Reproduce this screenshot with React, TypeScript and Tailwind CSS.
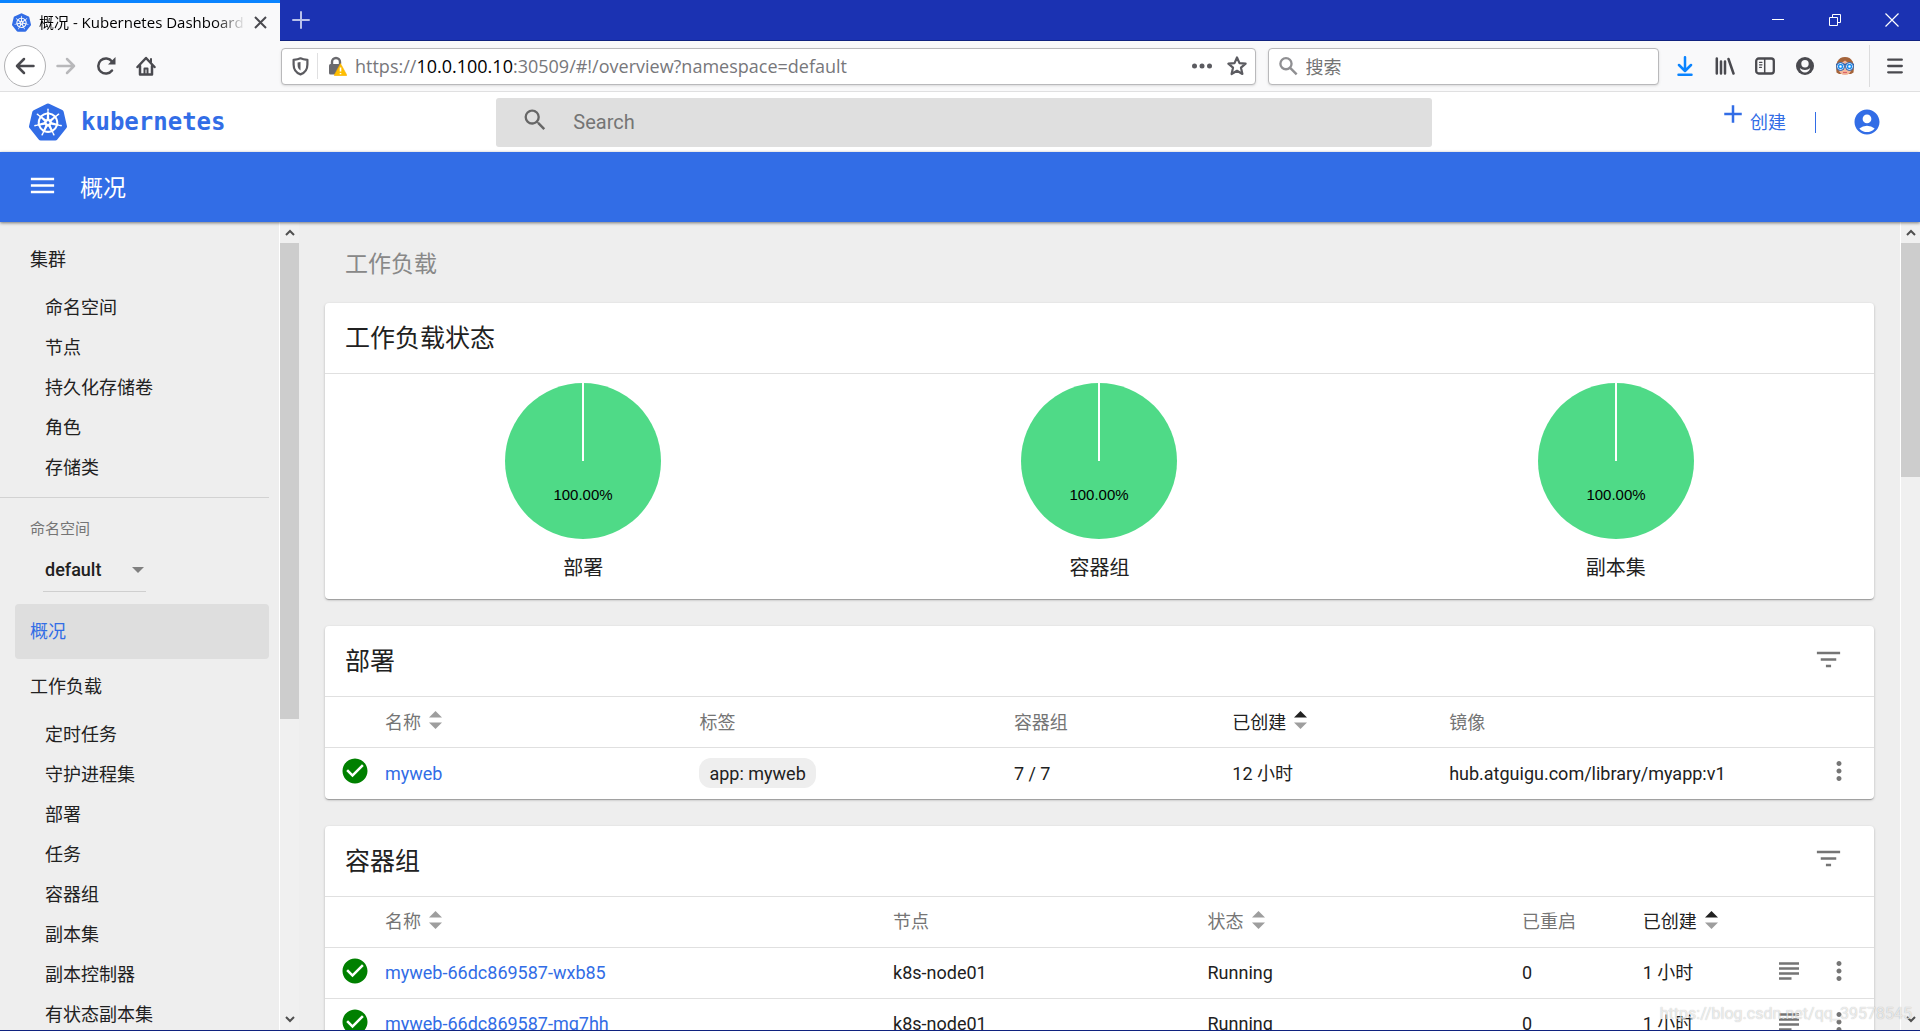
import React from "react";
import {
  MdAccountCircle,
  MdAdd,
  MdCheckCircle,
  MdFilterList,
  MdMenu,
  MdMoreVert,
  MdSearch,
  MdSubject,
} from "react-icons/md";
import { SiKubernetes } from "react-icons/si";

interface Column {
  label: string;
  width: string;
  sort?: "none" | "asc";
}

interface Pod {
  name: string;
  node: string;
  status: string;
  restarts: number;
  age: string;
}

const clusterItems = ["命名空间", "节点", "持久化存储卷", "角色", "存储类"];

const workloadItems = [
  "定时任务",
  "守护进程集",
  "部署",
  "任务",
  "容器组",
  "副本集",
  "副本控制器",
  "有状态副本集",
];

const charts = ["部署", "容器组", "副本集"];

const deploymentColumns: Column[] = [
  { label: "名称", width: "w-[20.3%]", sort: "none" },
  { label: "标签", width: "w-[20.3%]" },
  { label: "容器组", width: "w-[14.1%]" },
  { label: "已创建", width: "w-[14%]", sort: "asc" },
  { label: "镜像", width: "" },
];

const podColumns: Column[] = [
  { label: "名称", width: "w-[32.8%]", sort: "none" },
  { label: "节点", width: "w-[20.3%]" },
  { label: "状态", width: "w-[20.3%]", sort: "none" },
  { label: "已重启", width: "w-[7.8%]" },
  { label: "已创建", width: "", sort: "asc" },
];

const pods: Pod[] = [
  { name: "myweb-66dc869587-wxb85", node: "k8s-node01", status: "Running", restarts: 0, age: "1 小时" },
  { name: "myweb-66dc869587-mg7hh", node: "k8s-node01", status: "Running", restarts: 0, age: "1 小时" },
];

const TitleBar: React.FC = () => (
  <div className="flex h-[41px] shrink-0 border-b border-[#10227f] bg-[#1b32b2]">
    <div className="flex h-[41px] w-[280px] items-center border-t-[3px] border-[#0a84ff] bg-[#f9f9fa] pl-3 pr-[10px]">
      <SiKubernetes size={19} className="shrink-0 text-[#326de6]" />
      <span className="ml-2 flex-1 overflow-hidden whitespace-nowrap bg-gradient-to-r from-black from-85% to-transparent bg-clip-text font-['Open_Sans','Noto_Sans_CJK_SC',sans-serif] text-[15px] text-transparent">
        概况 - Kubernetes Dashboard
      </span>
      <button aria-label="关闭标签页" className="ml-1 flex h-5 w-5 items-center justify-center">
        <svg width="13" height="13" viewBox="0 0 13 13" stroke="#4a4a4f" strokeWidth="2">
          <path d="M1 1l11 11M12 1L1 12" />
        </svg>
      </button>
    </div>
    <button aria-label="新标签页" className="flex w-[42px] items-center justify-center">
      <svg width="18" height="18" viewBox="0 0 18 18" stroke="#b9c1ea" strokeWidth="2" strokeLinecap="round">
        <path d="M9 1v16M1 9h16" />
      </svg>
    </button>
    <div className="ml-auto flex pb-px">
      <button aria-label="最小化" className="flex w-14 items-center justify-center">
        <svg width="12" height="12" stroke="#fff">
          <path d="M0 5.5h12" />
        </svg>
      </button>
      <button aria-label="还原" className="flex w-[57px] items-center justify-center">
        <svg width="12" height="12" stroke="#fff" fill="none">
          <path d="M0.5 3.5h8v8h-8zM3.5 3.5v-3h8v8h-3" />
        </svg>
      </button>
      <button aria-label="关闭" className="flex w-[57px] items-center justify-center">
        <svg width="14" height="14" stroke="#fff" strokeWidth="1.2">
          <path d="M0.5 0.5l13 13M13.5 0.5l-13 13" />
        </svg>
      </button>
    </div>
  </div>
);

const FaceIcon: React.FC = () => (
  <svg width="20" height="20" viewBox="0 0 20 20">
    <path d="M1.5 16.500C0 7 3 1 10 1s10 6 8.500 15.500L16 18H4z" fill="#a5643a" />
    <path d="M3.500 8c2-1 5-2 6.500-3.500C11.500 6 14.500 7 16.500 8v5c-1 4-3 6-6.500 6s-5.500-2-6.500-6z" fill="#f3b79b" />
    <path d="M1 8.500h18" stroke="#1d57a8" strokeWidth="1.500" />
    <circle cx="5.500" cy="10.500" r="4" fill="#e8f4ff" stroke="#1d57a8" />
    <circle cx="14.500" cy="10.500" r="4" fill="#e8f4ff" stroke="#1d57a8" />
    <circle cx="5.500" cy="10.500" r="2" fill="#fff" stroke="#1b8ef2" strokeWidth="1.500" />
    <circle cx="14.500" cy="10.500" r="2" fill="#fff" stroke="#1b8ef2" strokeWidth="1.500" />
    <path d="M8 16.500h4" stroke="#d9626b" strokeWidth="1.200" />
  </svg>
);

const Toolbar: React.FC = () => (
  <div className="flex h-[51px] shrink-0 items-center border-b border-[#e0e0e1] bg-[#f9f9fa] pl-1 pr-1 text-[#4a4a4f]">
    <div className="flex w-[277px] shrink-0 items-center">
      <button aria-label="后退" className="flex h-[42px] w-[42px] items-center justify-center rounded-full border border-[#b1b1b3] bg-white">
        <svg width="20" height="18" viewBox="0 0 20 18" fill="none" stroke="currentColor" strokeWidth="2.5" strokeLinecap="round" strokeLinejoin="round">
          <path d="M18.500 9H2M9 2L2 9l7 7" />
        </svg>
      </button>
      <button aria-label="前进" className="flex w-10 items-center justify-center text-[#b8b8ba]">
        <svg width="20" height="18" viewBox="0 0 20 18" fill="none" stroke="currentColor" strokeWidth="2.5" strokeLinecap="round" strokeLinejoin="round">
          <path d="M1.500 9H18M11 2l7 7-7 7" />
        </svg>
      </button>
      <button aria-label="刷新" className="flex w-10 items-center justify-center">
        <svg width="20" height="20" viewBox="0 0 20 20" fill="none" stroke="currentColor" strokeWidth="2.500" strokeLinecap="round">
          <path d="M16 14.500A7.600 7.600 0 1 1 16 5.500" />
          <path d="M19.500 1v7.500H12z" fill="currentColor" stroke="none" />
        </svg>
      </button>
      <button aria-label="主页" className="flex w-10 items-center justify-center">
        <svg width="20" height="20" viewBox="0 0 20 20" fill="none" stroke="currentColor" strokeWidth="2.500" strokeLinecap="round" strokeLinejoin="round">
          <path d="M1.500 11L10 2l8.500 9" />
          <path d="M4 10v8.500h12V10" />
          <path d="M8.500 18v-5.500h3V18M15 3v3" strokeWidth="2" />
        </svg>
      </button>
    </div>
    <div className="flex h-[37px] flex-1 items-center rounded-sm border border-[#b9b9bb] bg-white pl-2.5 pr-2 shadow-sm">
      <svg width="17" height="19" viewBox="0 0 17 19" fill="none" stroke="#5b5b60" strokeWidth="2.200" strokeLinejoin="round">
        <path d="M8.500 1.300c2.300 1.200 4.700 1.400 6.900 1.500v4.700c0 5-2.600 8.400-6.900 9.900-4.300-1.500-6.900-4.900-6.900-9.900V2.800c2.200-.1 4.600-.3 6.900-1.500z" />
        <path d="M8.500 5v8.500c-1.600-1-2.900-2.700-2.900-5.500V5.500z" fill="#5b5b60" stroke="none" />
      </svg>
      <span className="ml-2 h-[26px] w-px bg-[#e0e0e1]" />
      <svg className="ml-2.5 shrink-0" width="19" height="20" viewBox="0 0 19 20">
        <path d="M4 9V6a4 4 0 0 1 8 0v2" fill="none" stroke="#6a6a6e" strokeWidth="2.400" />
        <rect x="1" y="8" width="12" height="10.500" rx="1.500" fill="#6a6a6e" />
        <path d="M12.500 7.500l6 11a.9.900 0 0 1-.8 1.300H7.300a.9.900 0 0 1-.8-1.300z" fill="#ffbf00" stroke="#f5a800" strokeWidth="0.500" />
        <path d="M12.500 11.500v4M12.500 17v1.300" stroke="#fff" strokeWidth="1.600" />
      </svg>
      <span className="ml-2 flex-1 font-['Open_Sans','Noto_Sans_CJK_SC',sans-serif] text-[18px] text-[#77777b]">
        https://<span className="text-black">10.0.100.10</span>:30509/#!/overview?namespace=default
      </span>
      <button aria-label="页面操作" className="mr-[15px]">
        <svg width="20" height="6" fill="#5b5b60">
          <circle cx="2.500" cy="3" r="2.500" />
          <circle cx="10" cy="3" r="2.500" />
          <circle cx="17.500" cy="3" r="2.500" />
        </svg>
      </button>
      <button aria-label="收藏">
        <svg width="20" height="20" viewBox="0 0 20 20" fill="none" stroke="#5b5b60" strokeWidth="2.200" strokeLinejoin="round">
          <path d="M10 1.500l2.500 5.600 6.100.6-4.600 4 1.400 6.300L10 14.800 4.600 18 6 11.700l-4.600-4 6.100-.6z" />
        </svg>
      </button>
    </div>
    <label className="ml-3 flex h-[37px] w-[391px] shrink-0 items-center rounded-sm border border-[#b9b9bb] bg-white pl-2.5 shadow-sm">
      <svg width="20" height="20" viewBox="0 0 20 20" fill="none" stroke="#8f8f92" strokeWidth="2.500">
        <circle cx="7.500" cy="7.500" r="6" />
        <path d="M12 12l7 7" />
      </svg>
      <input aria-label="搜索" placeholder="搜索" className="ml-2 w-full pt-0.5 text-[18px] outline-none placeholder:text-[#737373]" />
    </label>
    <div className="ml-[6px] flex shrink-0 items-center">
      <button aria-label="下载" className="flex w-10 items-center justify-center">
        <svg width="18" height="20" viewBox="0 0 18 20" fill="none" stroke="#0a84ff" strokeWidth="2.500" strokeLinecap="round" strokeLinejoin="round">
          <path d="M9 1.200V14M3 9l6 6 6-6M2.500 18.700h13" />
        </svg>
      </button>
      <button aria-label="书库" className="flex w-10 items-center justify-center">
        <svg width="20" height="18" viewBox="0 0 20 18" fill="none" stroke="currentColor" strokeWidth="2.500" strokeLinecap="round">
          <path d="M1.800 1.500v15M6 4.500v12M10 4.500v12M13.500 2l5 14.500" />
        </svg>
      </button>
      <button aria-label="侧栏" className="flex w-10 items-center justify-center">
        <svg width="20" height="18" viewBox="0 0 20 18" fill="none" stroke="currentColor" strokeWidth="2.300" strokeLinecap="round">
          <rect x="1.200" y="1.500" width="17.600" height="15" rx="2.500" />
          <path d="M9.700 2v14" strokeWidth="1.500" />
          <path d="M4.500 5.300h2.500M4.500 7.800h2.500M4.500 10.300h2" strokeWidth="1.200" />
        </svg>
      </button>
      <button aria-label="账户" className="flex w-10 items-center justify-center">
        <svg width="18" height="18" viewBox="0 0 18 18">
          <circle cx="9" cy="9" r="9" fill="currentColor" />
          <circle cx="9" cy="6.800" r="3.700" fill="#f9f9fa" />
          <path d="M3.800 11c1.300 1.300 3.200 2 5.200 2s3.900-.7 5.200-2c-.6 2.800-2.600 4.500-5.200 4.500S4.400 13.800 3.800 11z" fill="#f9f9fa" />
        </svg>
      </button>
      <button aria-label="扩展" className="flex w-10 items-center justify-center">
        <FaceIcon />
      </button>
      <span className="ml-1 h-[42px] w-px bg-[#dcdcdd]" />
      <button aria-label="菜单" className="ml-1 flex w-[42px] items-center justify-center">
        <svg width="16" height="16" viewBox="0 0 16 16" stroke="currentColor" strokeWidth="2.300" strokeLinecap="round">
          <path d="M1.200 1.700h13.600M1.200 8h13.600M1.200 14.300h13.600" />
        </svg>
      </button>
    </div>
  </div>
);

const Header: React.FC = () => (
  <header className="flex h-[60px] shrink-0 items-center bg-white text-[#326de6]">
    <a href="#overview" className="flex w-[496px] shrink-0 items-center pl-[29px]">
      <SiKubernetes size={38} />
      <span className="ml-[14px] font-['DejaVu_Sans_Mono',monospace] text-2xl font-bold">kubernetes</span>
    </a>
    <label className="flex h-[49px] flex-1 items-center rounded-[3px] bg-[#dfdfdf] pl-[25px]">
      <MdSearch size={30} className="mb-1 text-[#666]" />
      <input aria-label="Search" placeholder="Search" className="ml-6 w-full text-xl outline-none placeholder:text-[#757575]" />
    </label>
    <div className="flex w-[488px] shrink-0 items-center justify-end pr-[38px]">
      <button className="flex items-center text-[18px]">
        <MdAdd size={30} className="mb-4" />
        <span className="ml-0.5">创建</span>
      </button>
      <span className="ml-[29px] h-[21px] w-px bg-[#326de6]" />
      <button aria-label="用户" className="ml-9">
        <MdAccountCircle size={30} />
      </button>
    </div>
  </header>
);

const Scrollbar: React.FC<{ thumb: string }> = ({ thumb }) => (
  <div className="flex w-5 shrink-0 flex-col items-center border-l border-white bg-[#f0f0f0]">
    <svg className="my-[6px] shrink-0" width="10" height="9" fill="none" stroke="#505050" strokeWidth="2">
      <path d="M1 7l4-4 4 4" />
    </svg>
    <div className={`w-full bg-[#cdcdcd] ${thumb}`} />
    <svg className="mb-[6px] mt-auto shrink-0" width="10" height="9" fill="none" stroke="#505050" strokeWidth="2">
      <path d="M1 2l4 4 4-4" />
    </svg>
  </div>
);

const NavGroup: React.FC<{ title: string; items: string[] }> = ({ title, items }) => (
  <div>
    <a href="#group" className="flex h-[55px] items-center pl-[30px]">
      {title}
    </a>
    {items.map((item) => (
      <a key={item} href="#item" className="flex h-10 items-center pl-[45px]">
        {item}
      </a>
    ))}
  </div>
);

const Sidebar: React.FC = () => (
  <nav className="w-[279px] shrink-0 overflow-hidden pr-[10px] pt-[10px] text-[18px]">
    <NavGroup title="集群" items={clusterItems} />
    <div className="mt-[10px] border-t border-[#d2d2d2] pt-5">
      <label htmlFor="namespace" className="block pl-[30px] text-[15px] leading-[22px] text-[#757575]">
        命名空间
      </label>
      <div className="relative ml-[43px] mt-[6px] h-[46px] w-[103px] border-b border-[#cfcfcf]">
        <select id="namespace" className="h-[46px] w-full appearance-none pl-0.5 font-medium outline-none">
          <option>default</option>
        </select>
        <svg className="pointer-events-none absolute right-0.5 top-[21px]" width="12" height="6" fill="#808080">
          <path d="M0 0h12L6 6z" />
        </svg>
      </div>
    </div>
    <a href="#overview" className="ml-[15px] mt-3 flex h-[55px] items-center rounded bg-[#dedede] pl-[15px] text-[#326de6]">
      概况
    </a>
    <NavGroup title="工作负载" items={workloadItems} />
  </nav>
);

const SortIcon: React.FC<{ active: boolean }> = ({ active }) => (
  <svg className="ml-2 mb-1" width="13" height="18" viewBox="0 0 13 18">
    <path d="M0 6.500h13L6.500 0z" fill={active ? "#212121" : "#9e9e9e"} />
    <path d="M0 11.500h13L6.500 18z" fill="#9e9e9e" />
  </svg>
);

interface CardProps {
  title: string;
  filter?: boolean;
  children: React.ReactNode;
}

const Card: React.FC<CardProps> = ({ title, filter, children }) => (
  <section className="mb-[27px] rounded-sm bg-white shadow-[0_1px_3px_0_rgba(0,0,0,0.2),0_1px_1px_0_rgba(0,0,0,0.14),0_2px_1px_-1px_rgba(0,0,0,0.12)]">
    <div className="flex h-[70px] items-center justify-between pl-5 pr-[30px]">
      <h2 className="pt-0.5 text-[25px]">{title}</h2>
      {filter && (
        <button aria-label="筛选" className="mb-1 text-[#757575]">
          <MdFilterList size={31} />
        </button>
      )}
    </div>
    {children}
  </section>
);

const TableHead: React.FC<{ columns: Column[] }> = ({ columns }) => (
  <thead>
    <tr className="h-[51px] border-t border-[#e0e0e0]">
      <th className="w-[60px]" />
      {columns.map((col) => (
        <th key={col.label} className={`text-left font-normal ${col.width}`}>
          {col.sort ? (
            <button className={`flex items-center ${col.sort === "asc" ? "text-[#212121]" : "text-[#757575]"}`}>
              {col.label}
              <SortIcon active={col.sort === "asc"} />
            </button>
          ) : (
            <span className="text-[#757575]">{col.label}</span>
          )}
        </th>
      ))}
      <th className="w-[110px]" />
    </tr>
  </thead>
);

const StatusCell: React.FC = () => (
  <td className="pl-[15px]">
    <MdCheckCircle size={30} className="mb-1 text-[#008000]" />
  </td>
);

const ActionCell: React.FC<{ logs?: boolean }> = ({ logs }) => (
  <td>
    <div className="mb-1 flex items-center justify-end gap-5 pr-5 text-[#757575]">
      {logs && (
        <button aria-label="日志">
          <MdSubject size={30} />
        </button>
      )}
      <button aria-label="操作">
        <MdMoreVert size={30} />
      </button>
    </div>
  </td>
);

const DeploymentTable: React.FC = () => (
  <table className="w-full table-fixed">
    <TableHead columns={deploymentColumns} />
    <tbody>
      <tr className="h-[51px] border-t border-[#e0e0e0]">
        <StatusCell />
        <td>
          <a href="#myweb" className="text-[#326de6]">myweb</a>
        </td>
        <td>
          <span className="inline-flex h-[30px] items-center rounded-xl bg-[#eee] px-[10px]">app: myweb</span>
        </td>
        <td>7 / 7</td>
        <td>12 小时</td>
        <td>hub.atguigu.com/library/myapp:v1</td>
        <ActionCell />
      </tr>
    </tbody>
  </table>
);

const PodTable: React.FC = () => (
  <table className="w-full table-fixed">
    <TableHead columns={podColumns} />
    <tbody>
      {pods.map((pod) => (
        <tr key={pod.name} className="h-[51px] border-t border-[#e0e0e0]">
          <StatusCell />
          <td>
            <a href="#pod" className="text-[#326de6]">{pod.name}</a>
          </td>
          <td>{pod.node}</td>
          <td>{pod.status}</td>
          <td>{pod.restarts}</td>
          <td>{pod.age}</td>
          <ActionCell logs />
        </tr>
      ))}
    </tbody>
  </table>
);

const PieChart: React.FC<{ label: string }> = ({ label }) => (
  <div className="flex flex-1 flex-col items-center pt-2">
    <svg width="158" height="158" viewBox="0 0 158 158">
      <circle cx="79" cy="79" r="78" fill="#4fda87" />
      <path d="M79 0v79" stroke="#fff" strokeWidth="2" />
      <text x="79" y="118" textAnchor="middle" fontFamily="Liberation Sans, sans-serif" fontSize="15">
        100.00%
      </text>
    </svg>
    <div className="mt-[14px] text-xl">{label}</div>
  </div>
);

const App: React.FC = () => {
  return (
    <div className="relative flex h-screen flex-col overflow-hidden border-b border-[#10227f] bg-[#eee] font-['Roboto','Noto_Sans_CJK_SC',sans-serif] text-[#212121]">
      <TitleBar />
      <Toolbar />
      <Header />
      <div className="z-10 flex h-[70px] shrink-0 items-center bg-[#326de6] pl-[27px] text-white shadow-[0_1px_3px_rgba(0,0,0,0.5)]">
        <button aria-label="菜单" className="mb-1">
          <MdMenu size={31} />
        </button>
        <h1 className="ml-[22px] pt-1 text-[23px]">概况</h1>
      </div>
      <div className="flex min-h-0 flex-1">
        <Sidebar />
        <Scrollbar thumb="h-[476px]" />
        <main className="min-w-0 flex-1 overflow-hidden px-[26px] text-[18px]">
          <div className="flex h-[81px] items-center pl-5 pt-1.5 text-[23px] text-[#888]">工作负载</div>
          <Card title="工作负载状态">
            <div className="flex h-[226px] border-t border-[#e0e0e0]">
              {charts.map((label) => (
                <PieChart key={label} label={label} />
              ))}
            </div>
          </Card>
          <Card title="部署" filter>
            <DeploymentTable />
          </Card>
          <Card title="容器组" filter>
            <PodTable />
          </Card>
        </main>
        <Scrollbar thumb="h-[234px]" />
      </div>
      <div className="pointer-events-none absolute bottom-1 right-2 z-20 text-[16px] text-white/70 [text-shadow:0_0_1px_rgba(0,0,0,0.3)]">
        https://blog.csdn.net/qq_39578545
      </div>
    </div>
  );
};

export default App;
